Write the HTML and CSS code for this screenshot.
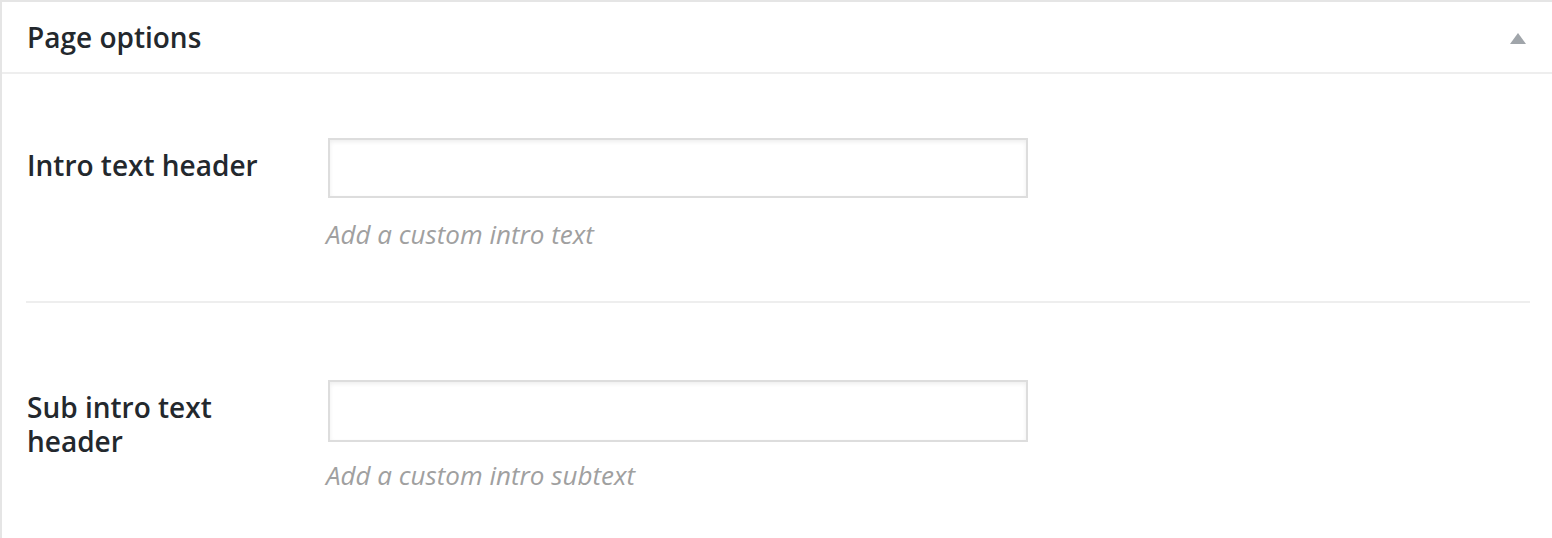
FILE: index.html
```html
<!DOCTYPE html>
<html lang="en">
<head>
<meta charset="utf-8">
<title>Page options</title>
<link rel="stylesheet" href="styles.css">
</head>
<body>
<div class="metabox">
  <div class="metabox-header">
    <h2 class="metabox-title">Page options</h2>
    <span class="toggle" aria-hidden="true"></span>
  </div>
  <div class="metabox-body">
    <div class="field field-first">
      <label class="field-label" for="intro">Intro text header</label>
      <div class="field-control">
        <input class="text-input" id="intro" type="text">
        <p class="description">Add a custom intro text</p>
      </div>
    </div>
    <hr class="separator">
    <div class="field field-second">
      <label class="field-label" for="subintro">Sub intro text header</label>
      <div class="field-control">
        <input class="text-input" id="subintro" type="text">
        <p class="description">Add a custom intro subtext</p>
      </div>
    </div>
  </div>
</div>
</body>
</html>
```

FILE: styles.css
```css
html, body {
  margin: 0;
  padding: 0;
  background: #fff;
  overflow: hidden;
}

body {
  font-family: "Open Sans", "Noto Sans", "Liberation Sans", sans-serif;
  color: #23282d;
}

.metabox {
  border-top: 2px solid #e5e5e5;
  border-left: 2px solid #e5e5e5;
  min-height: 600px;
  box-sizing: border-box;
}

.metabox-header {
  height: 70px;
  border-bottom: 2px solid #eeeeee;
  display: flex;
  align-items: center;
  justify-content: space-between;
  padding: 0 26px 0 25px;
}

.metabox-title {
  margin: 0;
  font-size: 28px;
  font-weight: 600;
  line-height: 36px;
  color: #23282d;
  position: relative;
  top: 0;
}

.toggle {
  width: 0;
  height: 0;
  border-left: 8px solid transparent;
  border-right: 8px solid transparent;
  border-bottom: 11px solid #a0a5aa;
  position: relative;
  top: 1px;
}

.metabox-body {
  padding: 0 22px 0 24px;
}

.field {
  display: flex;
  align-items: flex-start;
}

.field-first {
  padding-top: 64px;
}

.field-second {
  padding-top: 77px;
}

.field-label {
  width: 300px;
  flex: none;
  box-sizing: border-box;
  padding: 10px 30px 0 1px;
  font-size: 28px;
  font-weight: 600;
  line-height: 34px;
  color: #23282d;
}

.field-second .field-label {
  padding-top: 10px;
}

.field-control {
  display: flex;
  flex-direction: column;
  margin-left: 2px;
}

.text-input {
  display: block;
  width: 700px;
  height: 60px;
  box-sizing: border-box;
  margin: 0;
  border: 2px solid #dddddd;
  background: #fff;
  box-shadow: inset 0 2px 4px rgba(0, 0, 0, 0.07);
  outline: none;
  border-radius: 0;
}

.field-second .text-input {
  height: 62px;
}

.description {
  margin: 18px 0 0 -2px;
  font-size: 26px;
  font-style: italic;
  line-height: 36px;
  color: #a0a0a0;
}

.field-second .description {
  margin-top: 15px;
}

.separator {
  border: 0;
  border-top: 2px solid #eeeeee;
  margin: 49px 0 0 0;
  height: 0;
}
```
